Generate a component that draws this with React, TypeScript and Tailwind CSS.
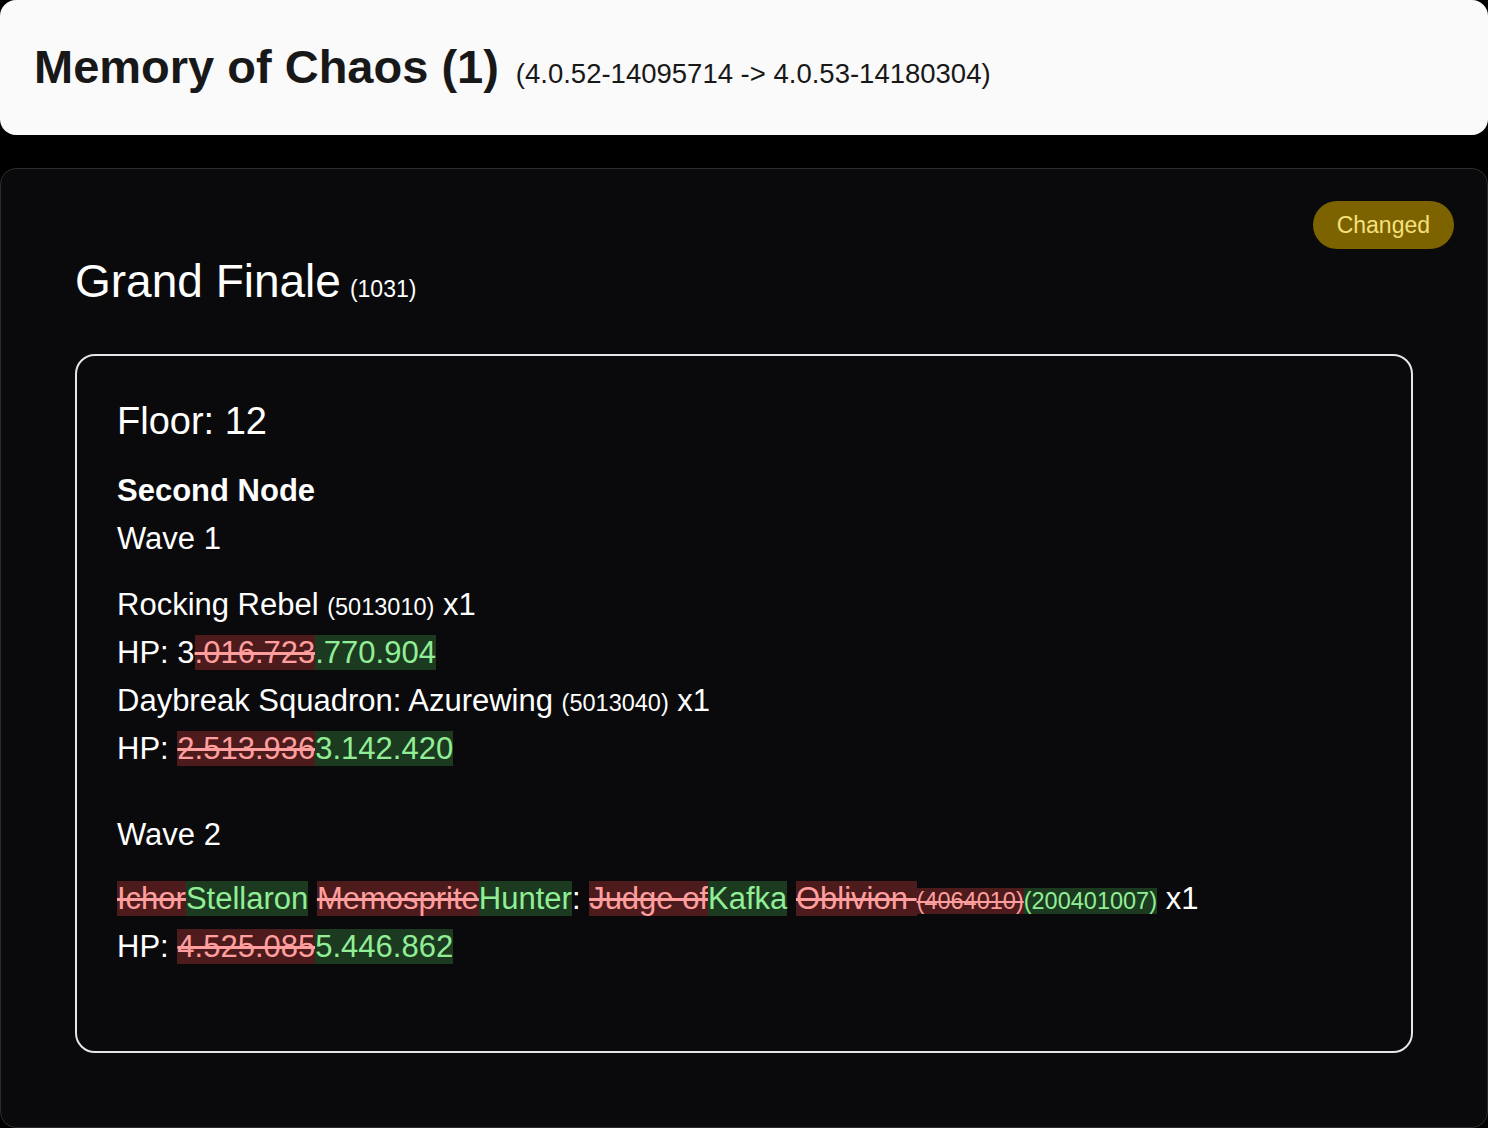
import React from 'react';

type Part = { text: string; kind?: 'del' | 'ins'; small?: boolean };

const Diff: React.FC<{ parts: Part[] }> = ({ parts }) => (
  <>
    {parts.map((p, i) => {
      const size = p.small ? 'text-[23.5px] leading-none' : '';
      if (p.kind === 'del') {
        return (
          <span key={i} className={`bg-[#4d1b1c] text-[#ff9e9e] line-through decoration-[#ff9e9e] ${size}`}>
            {p.text}
          </span>
        );
      }
      if (p.kind === 'ins') {
        return (
          <span key={i} className={`bg-[#1b3a20] text-[#92ee96] ${size}`}>
            {p.text}
          </span>
        );
      }
      return (
        <span key={i} className={size}>
          {p.text}
        </span>
      );
    })}
  </>
);

const Id: React.FC<{ children: React.ReactNode }> = ({ children }) => (
  <span className="text-[23.5px] leading-none">{children}</span>
);

export default function App() {
  return (
    <div
      className="min-h-[1128px] bg-black text-white"
      style={{ fontFamily: '"Liberation Sans", Arial, sans-serif' }}
    >
      {/* Header */}
      <div className="flex h-[135px] items-center rounded-2xl bg-[#fafafa] px-[34px]">
        <div className="flex items-baseline gap-[17px] text-[#181818]">
          <h1 className="text-[47px] font-bold leading-[1.2]">Memory of Chaos (1)</h1>
          <span className="text-[27.5px] leading-none">(4.0.52-14095714 -&gt; 4.0.53-14180304)</span>
        </div>
      </div>

      {/* Event card */}
      <div className="relative mt-[33px] h-[960px] rounded-2xl border border-[#2c2c2e] bg-[#0a0a0c] px-[74px] pt-[85px]">
        <span className="absolute right-[33px] top-[32px] rounded-full bg-[#7c6300] px-[24px] py-[9px] text-[23px] leading-[30px] text-[#f6e07c]">
          Changed
        </span>

        <h2 className="text-[46px] leading-[1.2]">
          Grand Finale<span className="ml-[9px] text-[23px]">(1031)</span>
        </h2>

        <div className="mt-[45px] rounded-[20px] border-2 border-[#e6e6e6] px-[40px] pb-[40px] pt-[42px] text-[31px] leading-[48px]">
          <div className="text-[38px] leading-[46px]">Floor: 12</div>

          <div className="mt-[23px]">
            <div className="font-bold">Second Node</div>

            <div className="mb-[38px]">
              <div>Wave 1</div>
              <div className="mt-[18px]">
                <div>
                  Rocking Rebel <Id>(5013010)</Id> x1
                </div>
                <div>
                  HP:{' '}
                  <Diff
                    parts={[
                      { text: '3' },
                      { text: '.016.723', kind: 'del' },
                      { text: '.770.904', kind: 'ins' },
                    ]}
                  />
                </div>
                <div>
                  Daybreak Squadron: Azurewing <Id>(5013040)</Id> x1
                </div>
                <div>
                  HP:{' '}
                  <Diff
                    parts={[
                      { text: '2.513.936', kind: 'del' },
                      { text: '3.142.420', kind: 'ins' },
                    ]}
                  />
                </div>
              </div>
            </div>

            <div className="mb-[40px]">
              <div>Wave 2</div>
              <div className="mt-[16px]">
                <div>
                  <Diff
                    parts={[
                      { text: 'Ichor', kind: 'del' },
                      { text: 'Stellaron', kind: 'ins' },
                      { text: ' ' },
                      { text: 'Memosprite', kind: 'del' },
                      { text: 'Hunter', kind: 'ins' },
                      { text: ': ' },
                      { text: 'Judge of', kind: 'del' },
                      { text: 'Kafka', kind: 'ins' },
                      { text: ' ' },
                      { text: 'Oblivion ', kind: 'del' },
                      { text: '(4064010)', kind: 'del', small: true },
                      { text: '(200401007)', kind: 'ins', small: true },
                    ]}
                  />{' '}
                  x1
                </div>
                <div>
                  HP:{' '}
                  <Diff
                    parts={[
                      { text: '4.525.085', kind: 'del' },
                      { text: '5.446.862', kind: 'ins' },
                    ]}
                  />
                </div>
              </div>
            </div>
          </div>
        </div>
      </div>
    </div>
  );
}
